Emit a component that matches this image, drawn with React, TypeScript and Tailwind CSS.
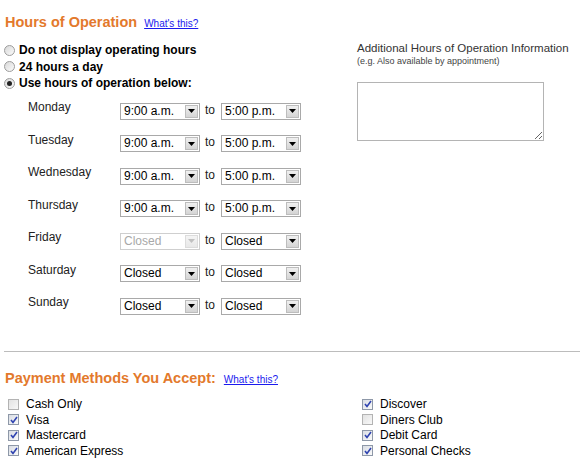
import React from "react";

type Day = { name: string; from: string; to: string; disabledFrom?: boolean };

const days: Day[] = [
  { name: "Monday", from: "9:00 a.m.", to: "5:00 p.m." },
  { name: "Tuesday", from: "9:00 a.m.", to: "5:00 p.m." },
  { name: "Wednesday", from: "9:00 a.m.", to: "5:00 p.m." },
  { name: "Thursday", from: "9:00 a.m.", to: "5:00 p.m." },
  { name: "Friday", from: "Closed", to: "Closed", disabledFrom: true },
  { name: "Saturday", from: "Closed", to: "Closed" },
  { name: "Sunday", from: "Closed", to: "Closed" },
];

const leftMethods = [
  { label: "Cash Only", checked: false },
  { label: "Visa", checked: true },
  { label: "Mastercard", checked: true },
  { label: "American Express", checked: true },
];

const rightMethods = [
  { label: "Discover", checked: true },
  { label: "Diners Club", checked: false },
  { label: "Debit Card", checked: true },
  { label: "Personal Checks", checked: true },
];

function FakeSelect({ value, disabled }: { value: string; disabled?: boolean }) {
  return (
    <div
      className={
        "relative flex h-[17px] w-[80px] items-center border bg-white pl-[3px] text-[12px] leading-[15px] " +
        (disabled ? "border-[#cfcfcf] text-[#a8a8a8]" : "border-[#a9a9a9] text-black")
      }
    >
      <span>{value}</span>
      <div
        className={
          "absolute right-[1px] top-[1px] flex h-[13px] w-[13px] items-center justify-center border bg-gradient-to-b " +
          (disabled ? "border-[#dcdcdc] from-[#f4f4f4] to-[#e8e8e8]" : "border-[#bdbdbd] from-[#f0f0f0] to-[#d4d4d4]")
        }
      >
        <svg width="7" height="4" viewBox="0 0 7 4">
          <path d="M0 0h7L3.5 4z" fill={disabled ? "#c0c0c0" : "#000"} />
        </svg>
      </div>
    </div>
  );
}

function Radio({ checked, label }: { checked?: boolean; label: string }) {
  return (
    <label className="flex h-[16.5px] items-center gap-[4px] pl-[4px] text-[12px] font-bold leading-[14px] text-black">
      <span className="flex h-[11px] w-[11px] items-center justify-center rounded-full border border-[#9c9c9c] bg-gradient-to-br from-[#d8d8d8] to-[#fbfbfb]">
        {checked && <span className="h-[5px] w-[5px] rounded-full bg-[#222]" />}
      </span>
      {label}
    </label>
  );
}

function Check({ checked, label }: { checked: boolean; label: string }) {
  return (
    <label className="flex h-[15.5px] items-center gap-[7px] text-[12px] leading-[14px] text-black">
      <span
        className={
          "flex h-[11px] w-[11px] items-center justify-center border bg-gradient-to-br " +
          (checked ? "border-[#8e98a8] from-[#d9dde4] to-[#fafafa]" : "border-[#b3b3b3] from-[#e2e2e2] to-[#f8f8f8]")
        }
      >
        {checked && (
          <svg width="8" height="8" viewBox="0 0 8 8">
            <path d="M1 4l2 2.5L7 1" fill="none" stroke="#2f43b0" strokeWidth="1.6" />
          </svg>
        )}
      </span>
      {label}
    </label>
  );
}

export default function App() {
  return (
    <div className="h-[471px] w-[580px] overflow-hidden bg-white font-['Liberation_Sans',Arial,sans-serif]">
      <div className="flex">
        <div className="w-[352px] pt-[13px]">
          <div className="flex items-baseline gap-[7px] pl-[5px]">
            <h2 className="text-[14.5px] font-bold leading-[18px] text-[#e3792c]">Hours of Operation</h2>
            <a href="#" className="text-[10px] leading-[12px] text-[#1a1aee] underline">
              What's this?
            </a>
          </div>

          <div className="mt-[10.75px]">
            <Radio label="Do not display operating hours" />
            <Radio label="24 hours a day" />
            <Radio label="Use hours of operation below:" checked />
          </div>

          <div className="mt-[8.75px] pl-[28px]">
            {days.map(d => (
              <div key={d.name} className="flex h-[32.5px] items-start">
                <div className="w-[92px] text-[12px] leading-[14px] text-[#222]">{d.name}</div>
                <div className="mt-[2.5px] flex items-start">
                  <FakeSelect value={d.from} disabled={d.disabledFrom} />
                  <span className="w-[21px] pl-[5px] text-[12px] leading-[14px] text-[#222]">to</span>
                  <FakeSelect value={d.to} />
                </div>
              </div>
            ))}
          </div>
        </div>

        <div className="pl-[5px] pt-[41px]">
          <div className="text-[11.5px] leading-[14px] text-[#333]">Additional Hours of Operation Information</div>
          <div className="mt-[1px] text-[9px] leading-[11px] text-[#444]">(e.g. Also available by appointment)</div>
          <textarea className="mt-[15px] h-[59px] w-[187px] resize border border-[#b4b4b4] bg-white" />
        </div>
      </div>

      <div className="ml-[4px] mt-[23px] h-px bg-[#bcbcbc]" />

      <div className="mt-[17.5px] flex items-baseline gap-[8px] pl-[5px]">
        <h2 className="text-[14.5px] font-bold leading-[18px] text-[#e3792c]">Payment Methods You Accept:</h2>
        <a href="#" className="text-[10px] leading-[12px] text-[#1a1aee] underline">
          What's this?
        </a>
      </div>

      <div className="mt-[9.25px] flex">
        <div className="w-[362px] pl-[8px]">
          {leftMethods.map(m => (
            <Check key={m.label} {...m} />
          ))}
        </div>
        <div>
          {rightMethods.map(m => (
            <Check key={m.label} {...m} />
          ))}
        </div>
      </div>
    </div>
  );
}
